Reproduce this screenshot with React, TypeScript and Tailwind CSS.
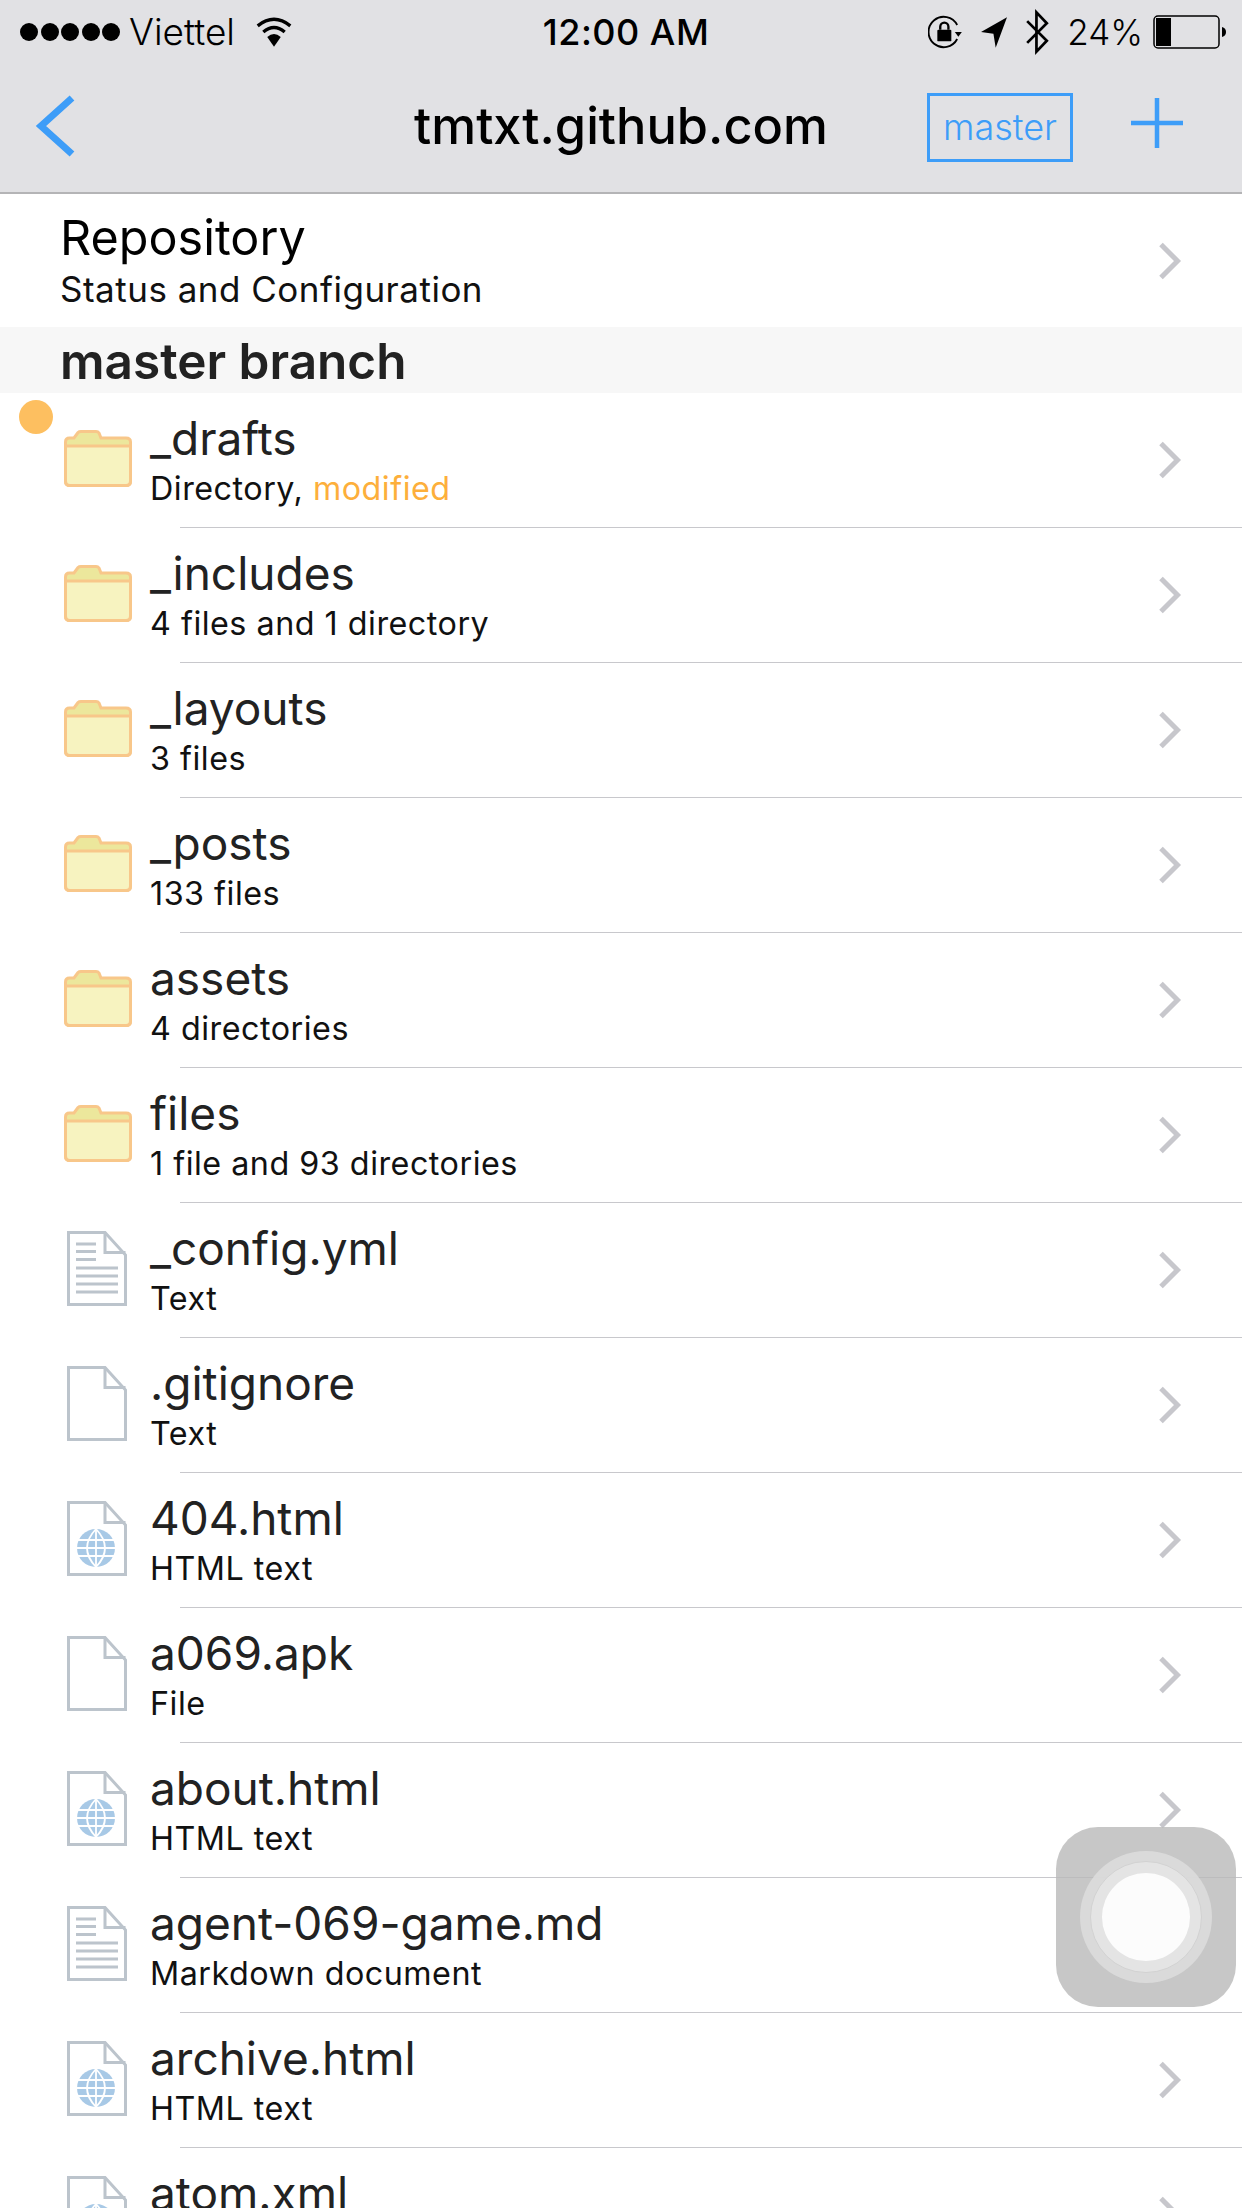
const BLUE = "#3d9df8"

interface Entry {
  name: string
  detail: string
  kind: "folder" | "doc" | "blank" | "web"
  modified?: boolean
}

const entries: Entry[] = [
  { name: "_drafts", detail: "Directory, ", kind: "folder", modified: true },
  { name: "_includes", detail: "4 files and 1 directory", kind: "folder" },
  { name: "_layouts", detail: "3 files", kind: "folder" },
  { name: "_posts", detail: "133 files", kind: "folder" },
  { name: "assets", detail: "4 directories", kind: "folder" },
  { name: "files", detail: "1 file and 93 directories", kind: "folder" },
  { name: "_config.yml", detail: "Text", kind: "doc" },
  { name: ".gitignore", detail: "Text", kind: "blank" },
  { name: "404.html", detail: "HTML text", kind: "web" },
  { name: "a069.apk", detail: "File", kind: "blank" },
  { name: "about.html", detail: "HTML text", kind: "web" },
  { name: "agent-069-game.md", detail: "Markdown document", kind: "doc" },
  { name: "archive.html", detail: "HTML text", kind: "web" },
  { name: "atom.xml", detail: "XML text", kind: "web" },
]

function Chevron() {
  return (
    <svg width="24" height="38" viewBox="0 0 24 38" fill="none" className="shrink-0">
      <path d="M3 2.500 L19.500 19 L3 35.500" stroke="#c7c7cc" strokeWidth="5" />
    </svg>
  )
}

function FolderIcon() {
  return (
    <svg width="68" height="57" viewBox="0 0 68 57" className="block">
      <path
        d="M1.500 12 Q1.500 8 5.500 8 H10 L14 2.500 Q15 1.500 17 1.500 H32 Q34 1.500 35 3 L37 8 H62 Q66.500 8 66.500 12 V51 Q66.500 55.500 62 55.500 H6 Q1.500 55.500 1.500 51 Z"
        fill="#ece79c"
        stroke="#f8c78a"
        strokeWidth="3"
      />
      <path
        d="M1.500 16 H66.500 V51 Q66.500 55.500 62 55.500 H6 Q1.500 55.500 1.500 51 Z"
        fill="#f7f3c0"
        stroke="#f8c78a"
        strokeWidth="3"
      />
    </svg>
  )
}

function DocIcon({ kind }: { kind: Entry["kind"] }) {
  return (
    <svg width="62" height="75" viewBox="0 0 62 75" fill="none" className="block ml-[3px]">
      <path d="M1.500 1.500 H38 L58.500 24 V73.500 H1.500 Z" fill="#fff" stroke="#bcc4cc" strokeWidth="3" />
      <path d="M38 1.500 V21.500 H58.500" stroke="#bcc4cc" strokeWidth="3" />
      {kind === "doc" && (
        <path
          d="M9 13 H29 M9 20.500 H29 M9 28.500 H29 M9 37 H51 M9 45 H51 M9 53 H51 M9 61 H51"
          stroke="#bcc4cc"
          strokeWidth="3"
        />
      )}
      {kind === "web" && (
        <g>
          <circle cx="29" cy="47" r="19" fill="#a8c9e6" />
          <path d="M10 39 H48 M10 47 H48 M10 55 H48 M29 28 V66" stroke="#fff" strokeWidth="1.800" />
          <path d="M29 28 Q11 47 29 66 M29 28 Q47 47 29 66" stroke="#fff" strokeWidth="1.800" />
        </g>
      )}
    </svg>
  )
}

function StatusBar() {
  return (
    <div className="grid grid-cols-[1fr_auto_1fr] items-center h-[60px] pt-[4px] text-black">
      <div className="flex items-center pl-[20px]">
        <div className="flex gap-[2.5px]">
          {[0, 1, 2, 3, 4].map((i) => (
            <div key={i} className="w-[18px] h-[18px] rounded-full bg-black" />
          ))}
        </div>
        <span className="ml-[9px] text-[37px] leading-[40px] font-light">Viettel</span>
        <svg width="36" height="32" viewBox="0 0 32 28" fill="none" className="ml-[21px]">
          <path d="M1.500 8.500 Q16 -3 30.500 8.500" stroke="#000" strokeWidth="3" />
          <path d="M6.500 14 Q16 6 25.500 14" stroke="#000" strokeWidth="3" />
          <path d="M10 18.500 Q16 13 22 18.500 L16 27 Z" fill="#000" />
        </svg>
      </div>
      <div className="pl-[10px] text-[36px] leading-[40px] font-medium tracking-[0.5px]">12:00 AM</div>
      <div className="flex items-center justify-end pr-[16px]">
        <svg width="35" height="36" viewBox="0 0 30 30" fill="none">
          <path d="M25 21 A13 13 0 1 1 25 9" stroke="#000" strokeWidth="1.600" />
          <path d="M23 15 H29 L26 19 Z" fill="#000" />
          <rect x="8" y="13" width="12" height="10" rx="1" fill="#000" />
          <path d="M10.500 13 V10.500 A3.500 3.500 0 0 1 17.500 10.500 V13" stroke="#000" strokeWidth="2" />
        </svg>
        <svg width="26" height="31" viewBox="0 0 23 27" className="ml-[18px]">
          <path d="M23 0 L0 13 L11 14.500 L13 27 Z" fill="#000" />
        </svg>
        <svg width="24" height="48" viewBox="0 0 22 42" fill="none" className="ml-[18px]">
          <path d="M2 11 L20 29 L10.500 39 V3 L20 13 L2 31" stroke="#000" strokeWidth="2.500" />
        </svg>
        <span className="ml-[18px] text-[35px] leading-[40px] font-light">24%</span>
        <svg width="73" height="34" viewBox="0 0 73 34" fill="none" className="ml-[10px]">
          <rect x="1" y="1" width="65" height="32" rx="4" stroke="#000" strokeWidth="1.500" />
          <rect x="3" y="3" width="15" height="28" fill="#000" />
          <path d="M69 12 Q73 13 73 17 Q73 21 69 22 Z" fill="#000" />
        </svg>
      </div>
    </div>
  )
}

function NavBar() {
  return (
    <div className="grid grid-cols-[1fr_auto_1fr] items-center h-[134px] border-b-2 border-[#b4b4b6]">
      <div className="pl-[35px]">
        <svg width="40" height="62" viewBox="0 0 40 62" fill="none" className="block">
          <path d="M37 3 L6 31 L37 59" stroke={BLUE} strokeWidth="7" />
        </svg>
      </div>
      <div className="text-[50.5px] leading-[60px] font-medium text-black">tmtxt.github.com</div>
      <div className="flex items-center justify-end pr-[59px] gap-[58px]">
        <div className="w-[146px] h-[69px] mt-[2px] border-[3px] border-[#3d9df8] text-[#3d9df8] text-[36px] leading-[63px] text-center font-light">
          master
        </div>
        <svg width="52" height="50" viewBox="0 0 52 50" fill="none" className="shrink-0 mb-[6px]">
          <path d="M26 0 V50 M0 25 H52" stroke={BLUE} strokeWidth="4.500" />
        </svg>
      </div>
    </div>
  )
}

function Row({ entry }: { entry: Entry }) {
  return (
    <div>
      <div className="flex items-center h-[134px] pr-[60px]">
        <div className="w-[150px] shrink-0 pl-[64px] -mt-[4px]">
          {entry.kind === "folder" ? <FolderIcon /> : <DocIcon kind={entry.kind} />}
        </div>
        <div className="flex-1 min-w-0">
          <div className="text-[46px] leading-[56px] text-[#222]">{entry.name}</div>
          <div className="text-[32.3px] leading-[45px] text-[#111] tracking-[0.5px]">
            {entry.detail}
            {entry.modified && <span className="text-[#fdaf3b]">modified</span>}
          </div>
        </div>
        <Chevron />
      </div>
      <div className="ml-[180px] h-px bg-[#c8c8cc]" />
    </div>
  )
}

export default function App() {
  return (
    <div className="relative w-[1242px] h-[2208px] overflow-hidden bg-white font-['Inter','Liberation_Sans',sans-serif]">
      <div className="bg-[#e1e1e4]">
        <StatusBar />
        <NavBar />
      </div>

      <div className="flex items-center h-[133px] pl-[60px] pr-[60px]">
        <div className="flex-1">
          <div className="text-[48.5px] leading-[56px] text-black">Repository</div>
          <div className="text-[35px] leading-[46px] text-[#111] tracking-[0.5px]">Status and Configuration</div>
        </div>
        <Chevron />
      </div>

      <div className="h-[66px] bg-[#f7f7f7] pl-[60px] text-[49.5px] leading-[69px] font-semibold text-[#222]">
        master branch
      </div>

      <div className="relative">
        <div className="absolute left-[19px] top-[7px] w-[34px] h-[34px] rounded-full bg-[#fdbf60]" />
        {entries.map((entry) => (
          <Row key={entry.name} entry={entry} />
        ))}
      </div>

      <div className="absolute left-[1056px] top-[1827px] w-[180px] h-[180px] rounded-[42px] bg-[#b9b9b9]/80 flex items-center justify-center">
        <div className="w-[132px] h-[132px] rounded-full bg-[#dcdcdc]/90 flex items-center justify-center">
          <div className="w-[112px] h-[112px] rounded-full bg-[#e4e4e4]/90 border border-[#d2d2d2] flex items-center justify-center">
            <div className="w-[88px] h-[88px] rounded-full bg-white/90" />
          </div>
        </div>
      </div>
    </div>
  )
}
